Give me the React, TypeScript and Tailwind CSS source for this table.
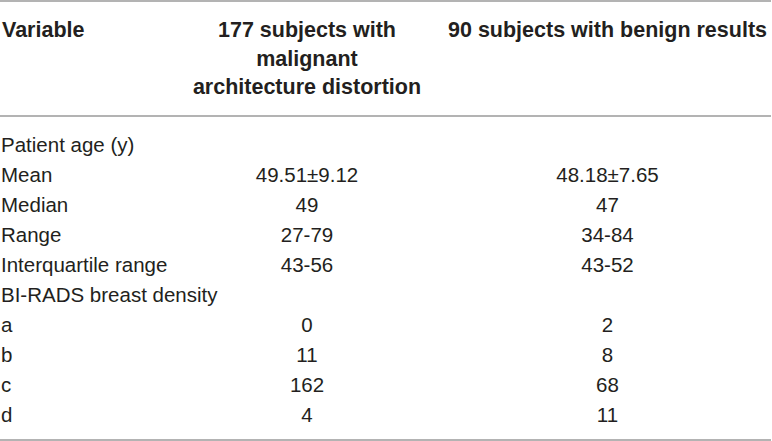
import React from "react";

const rows: [string, string, string][] = [
  ["Patient age (y)", "", ""],
  ["Mean", "49.51±9.12", "48.18±7.65"],
  ["Median", "49", "47"],
  ["Range", "27-79", "34-84"],
  ["Interquartile range", "43-56", "43-52"],
  ["BI-RADS breast density", "", ""],
  ["a", "0", "2"],
  ["b", "11", "8"],
  ["c", "162", "68"],
  ["d", "4", "11"],
];

export default function App() {
  return (
    <div
      className="w-[772px] h-[441px] bg-white text-[#231f20] overflow-hidden"
      style={{ fontFamily: '"Liberation Sans", Arial, sans-serif' }}
    >
      <div className="w-[771px] h-[2px] bg-[#b3b3b3]" />
      <div className="grid grid-cols-[170px_274px_327px] pt-[14px] pb-[13px] text-[21.5px] font-bold leading-[28.5px]">
        <div className="pl-[2px]">Variable</div>
        <div className="text-center">
          177 subjects with
          <br />
          malignant
          <br />
          architecture distortion
        </div>
        <div className="text-center">90 subjects with benign results</div>
      </div>
      <div className="w-[771px] h-[2px] bg-[#b3b3b3]" />
      <div className="pt-[13px] pb-[9px] text-[20.5px] leading-[30px]">
        {rows.map((r, i) => (
          <div key={i} className="grid grid-cols-[170px_274px_327px]">
            <div className="pl-[1px] whitespace-nowrap">{r[0]}</div>
            <div className="text-center">{r[1]}</div>
            <div className="text-center">{r[2]}</div>
          </div>
        ))}
      </div>
      <div className="w-[771px] h-[2px] bg-[#b3b3b3]" />
    </div>
  );
}
